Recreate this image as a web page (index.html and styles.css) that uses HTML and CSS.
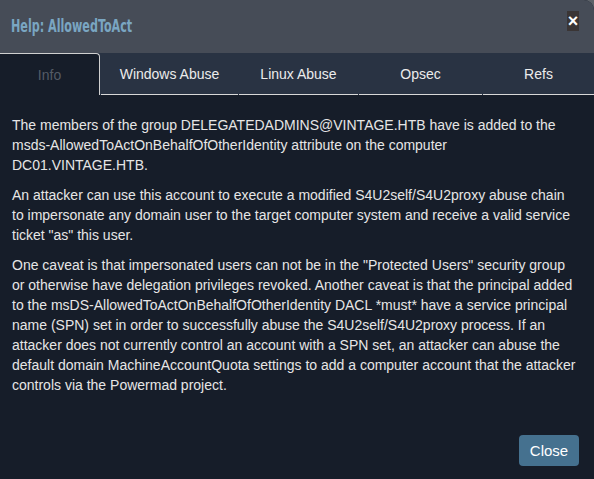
FILE: index.html
```html
<!DOCTYPE html>
<html>
<head>
<meta charset="utf-8">
<link rel="stylesheet" href="styles.css">
</head>
<body>
<div class="modal">
  <div class="modal-header">
    <h4 class="modal-title">Help: AllowedToAct</h4>
    <button class="close-x" type="button">×</button>
  </div>
  <div class="tabs">
    <div class="tab active">Info</div>
    <div class="tab">Windows Abuse</div>
    <div class="tab">Linux Abuse</div>
    <div class="tab">Opsec</div>
    <div class="tab">Refs</div>
  </div>
  <div class="modal-body">
    <p>The members of the group DELEGATEDADMINS@VINTAGE.HTB have is added to the msds-AllowedToActOnBehalfOfOtherIdentity attribute on the computer DC01.VINTAGE.HTB.</p>
    <p>An attacker can use this account to execute a modified S4U2self/S4U2proxy abuse chain to impersonate any domain user to the target computer system and receive a valid service ticket "as" this user.</p>
    <p>One caveat is that impersonated users can not be in the "Protected Users" security group or otherwise have delegation privileges revoked. Another caveat is that the principal added to the msDS-AllowedToActOnBehalfOfOtherIdentity DACL *must* have a service principal name (SPN) set in order to successfully abuse the S4U2self/S4U2proxy process. If an attacker does not currently control an account with a SPN set, an attacker can abuse the default domain MachineAccountQuota settings to add a computer account that the attacker controls via the Powermad project.</p>
  </div>
  <div class="modal-footer">
    <button class="btn-close" type="button">Close</button>
  </div>
</div>
</body>
</html>
```
FILE: styles.css
```css
html, body {
  margin: 0;
  padding: 0;
  height: 100%;
  background: #5d6269;
}
body {
  font-family: "Liberation Sans", Arial, sans-serif;
  font-size: 14px;
}
.modal {
  height: 479px;
  display: flex;
  flex-direction: column;
  background: #161d29;
  border-top-right-radius: 10px;
  overflow: hidden;
}
.modal-header {
  height: 53px;
  background: #464c57;
  display: flex;
  align-items: center;
  justify-content: space-between;
  padding: 0 15px 0 11px;
  box-sizing: border-box;
}
.modal-title {
  margin: 0 0 2px 0;
  font-family: "DejaVu Sans Condensed", "DejaVu Sans", sans-serif;
  font-stretch: condensed;
  font-weight: bold;
  font-size: 17px;
  color: #7aa6c2;
  transform: scaleX(0.73);
  transform-origin: left center;
  white-space: nowrap;
}
.close-x {
  align-self: flex-start;
  margin-top: 11px;
  width: 12px;
  height: 20px;
  padding: 0;
  border: 0;
  background: #3a3535;
  color: #ffffff;
  font-family: "Liberation Sans", Arial, sans-serif;
  font-weight: bold;
  font-size: 18px;
  line-height: 20px;
  display: flex;
  align-items: center;
  justify-content: center;
}
.tabs {
  display: grid;
  grid-template-columns: 101px 138px 120px 124px 1fr;
  background: #293343;
  height: 42px;
}
.tab {
  display: flex;
  align-items: center;
  justify-content: center;
  color: #ececec;
  font-size: 14px;
  border-bottom: 1px solid #d8d8d8;
  margin-right: 1px;
  box-sizing: border-box;
}
.tab:last-child {
  margin-right: 0;
}
.tab.active {
  background: #161d29;
  color: #545b66;
  border: 1px solid #d0d0d0;
  border-left: 0;
  border-bottom: 0;
  border-top-right-radius: 4px;
}
.modal-body {
  flex: 1;
  padding: 20px 15px 0 12px;
  color: #e6e6e6;
  line-height: 20px;
}
.modal-body p {
  margin: 0 0 10px 0;
}
.modal-footer {
  display: flex;
  justify-content: flex-end;
  padding: 0 15px 13px 0;
}
.btn-close {
  width: 60px;
  height: 31px;
  border: 0;
  border-radius: 4px;
  background: #45718f;
  color: #ffffff;
  font-family: "Liberation Sans", Arial, sans-serif;
  font-size: 15px;
  padding: 0;
}
```
